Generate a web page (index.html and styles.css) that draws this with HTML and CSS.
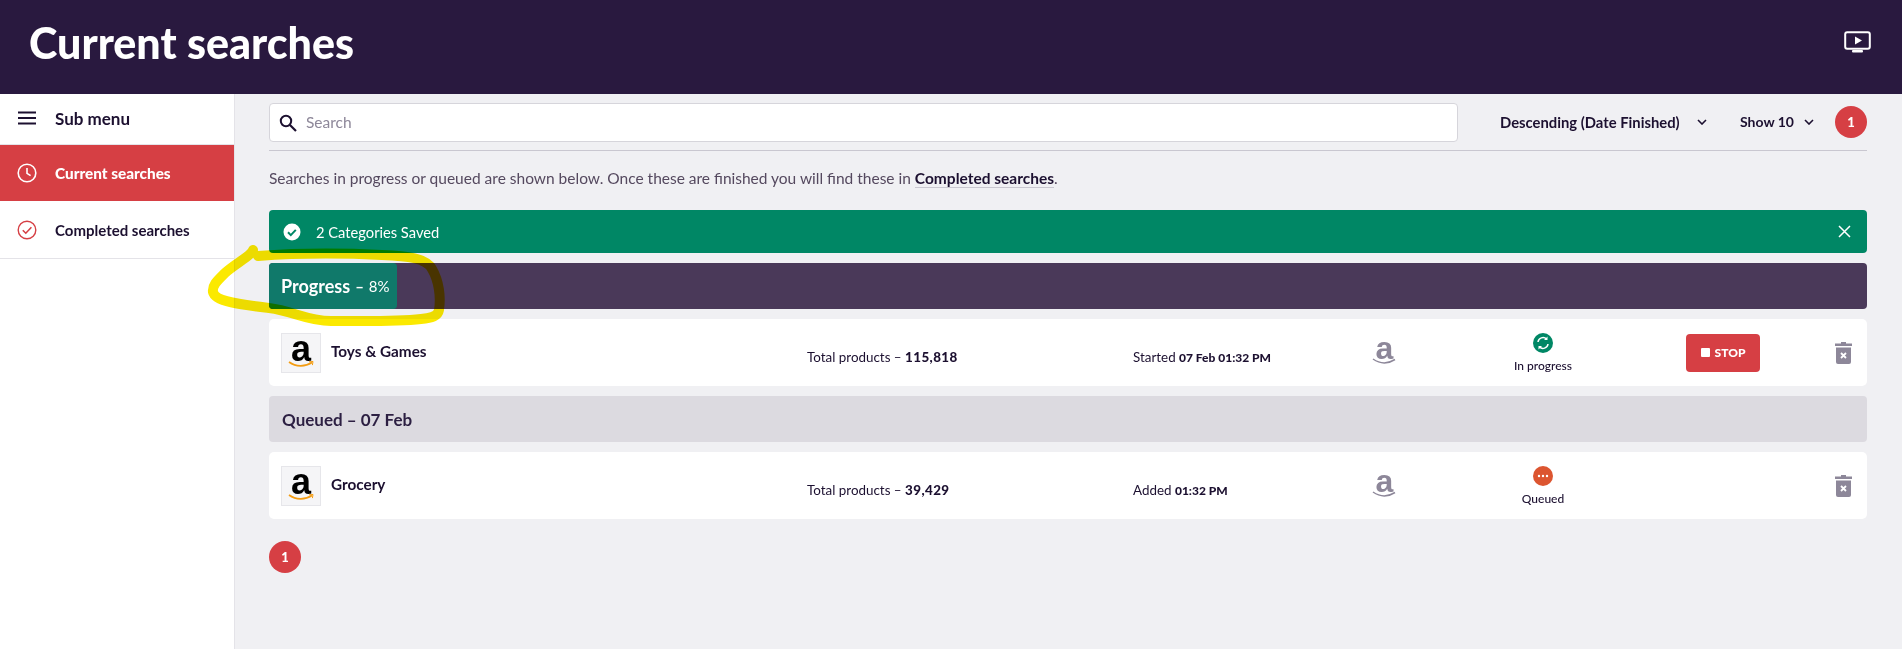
FILE: index.html
```html
<!DOCTYPE html>
<html lang="en">
<head>
    <meta charset="UTF-8">
    <meta name="viewport" content="width=device-width, initial-scale=1.0">
    <title>Current searches</title>
    <link rel="stylesheet" href="styles.css">
</head>
<body>
    <header class="top">
        <h1 class="top__title">Current searches</h1>
        <svg class="top__video" width="27" height="22" viewBox="0 0 27 22">
            <rect x="1.2" y="1.2" width="24.6" height="16.6" rx="2" fill="none" stroke="#fff" stroke-width="2"/>
            <path d="M11 5.5v8l7-4z" fill="#fff"/>
            <rect x="8" y="19" width="11" height="2.5" rx="1" fill="#fff"/>
        </svg>
    </header>

    <div class="page">
        <aside class="side">
            <div class="side__head">
                <svg width="18" height="14" viewBox="0 0 18 14"><path d="M0 1.5h18M0 7h18M0 12.5h18" stroke="#1c1030" stroke-width="2"/></svg>
                <span>Sub menu</span>
            </div>
            <a class="side__link side__link--on" href="#">
                <svg width="20" height="20" viewBox="0 0 20 20"><circle cx="10" cy="10" r="8.8" fill="none" stroke="#fff" stroke-width="1.6"/><path d="M10 5v5.3l3.6 2.4" fill="none" stroke="#fff" stroke-width="1.6"/></svg>
                <span>Current searches</span>
            </a>
            <a class="side__link" href="#">
                <svg width="20" height="20" viewBox="0 0 20 20"><circle cx="10" cy="10" r="8.8" fill="none" stroke="#d63f44" stroke-width="1.4"/><path d="M5.8 10.2l3 3 5.6-6" fill="none" stroke="#d63f44" stroke-width="1.6"/></svg>
                <span>Completed searches</span>
            </a>
        </aside>

        <main class="main">
            <div class="tools">
                <div class="search">
                    <svg width="18" height="18" viewBox="0 0 18 18"><circle cx="7" cy="7" r="5.2" fill="none" stroke="#1c1030" stroke-width="2"/><path d="M11 11l6 6" stroke="#1c1030" stroke-width="2.2"/></svg>
                    <span class="search__hint">Search</span>
                </div>
                <div class="sort sort--date">Descending (Date Finished)
                    <svg width="10" height="6" viewBox="0 0 10 6"><path d="M1 1l4 4 4-4" fill="none" stroke="#1c1030" stroke-width="1.6"/></svg>
                </div>
                <div class="sort sort--show">Show 10
                    <svg width="10" height="6" viewBox="0 0 10 6"><path d="M1 1l4 4 4-4" fill="none" stroke="#1c1030" stroke-width="1.6"/></svg>
                </div>
                <div class="pagenum">1</div>
            </div>

            <p class="intro">Searches in progress or queued are shown below. Once these are finished you will find these in <a href="#">Completed searches</a>.</p>

            <div class="alert">
                <svg width="18" height="18" viewBox="0 0 18 18"><circle cx="9" cy="9" r="8.5" fill="#fff"/><path d="M5 9.3l2.8 2.8 5-5.2" fill="none" stroke="#008765" stroke-width="2"/></svg>
                <span class="alert__text">2 Categories Saved</span>
                <svg class="alert__close" width="13" height="13" viewBox="0 0 13 13"><path d="M1 1l11 11M12 1L1 12" stroke="#fff" stroke-width="1.5"/></svg>
            </div>

            <div class="progress">
                <div class="progress__fill"><b>Progress</b> <b class="progress__dash">&ndash;</b> <span>8%</span></div>
            </div>

            <div class="row">
                <div class="row__name">
                    <div class="logo"><span>a</span><svg width="26" height="7" viewBox="0 0 26 7"><path d="M1 1c7 5 16 5 23 .5" fill="none" stroke="#f39c12" stroke-width="1.7"/><path d="M21 .8l4-.3-.6 3.6" fill="none" stroke="#f39c12" stroke-width="1"/></svg></div>
                    <b>Toys &amp; Games</b>
                </div>
                <div class="row__info row__info--total">Total products &ndash; <b>115,818</b></div>
                <div class="row__info">Started <b>07 Feb 01:32 PM</b></div>
                <div class="market"><span>a</span><svg width="25" height="7" viewBox="0 0 25 7"><path d="M1 1c7 5 15 5 22 .5" fill="none" stroke="#8d8799" stroke-width="1.5"/></svg></div>
                <div class="status">
                    <svg width="20" height="20" viewBox="0 0 20 20"><circle cx="10" cy="10" r="10" fill="#008765"/><path d="M5 9a5 5 0 0 1 8.600-2.800M15 11a5 5 0 0 1-8.600 2.800" fill="none" stroke="#fff" stroke-width="1.500"/><path d="M14.500 3.500v3.500h-3.500zM5.500 16.500v-3.500h3.500z" fill="#fff"/></svg>
                    <span>In progress</span>
                </div>
                <div class="stopcell"><button class="stop"><i></i>STOP</button></div>
                <svg class="trash" width="17" height="22" viewBox="0 0 17 22"><path d="M6 0h5v1.500h6v2.500H0V1.500h6z" fill="#8d8799"/><path d="M1 5.500h15V20a2 2 0 0 1-2 2H3a2 2 0 0 1-2-2z" fill="#8d8799"/><path d="M6 11l5 5M11 11l-5 5" stroke="#fff" stroke-width="1.800"/></svg>
            </div>

            <div class="queued">Queued &ndash; 07 Feb</div>

            <div class="row">
                <div class="row__name">
                    <div class="logo"><span>a</span><svg width="26" height="7" viewBox="0 0 26 7"><path d="M1 1c7 5 16 5 23 .5" fill="none" stroke="#f39c12" stroke-width="1.7"/><path d="M21 .8l4-.3-.6 3.6" fill="none" stroke="#f39c12" stroke-width="1"/></svg></div>
                    <b>Grocery</b>
                </div>
                <div class="row__info row__info--total">Total products &ndash; <b>39,429</b></div>
                <div class="row__info">Added <b>01:32 PM</b></div>
                <div class="market"><span>a</span><svg width="25" height="7" viewBox="0 0 25 7"><path d="M1 1c7 5 15 5 22 .5" fill="none" stroke="#8d8799" stroke-width="1.5"/></svg></div>
                <div class="status">
                    <svg width="20" height="20" viewBox="0 0 20 20"><circle cx="10" cy="10" r="10" fill="#dc5530"/><circle cx="6" cy="10" r="1.200" fill="#fff"/><circle cx="10" cy="10" r="1.200" fill="#fff"/><circle cx="14" cy="10" r="1.200" fill="#fff"/></svg>
                    <span>Queued</span>
                </div>
                <div class="stopcell"></div>
                <svg class="trash" width="17" height="22" viewBox="0 0 17 22"><path d="M6 0h5v1.500h6v2.500H0V1.500h6z" fill="#8d8799"/><path d="M1 5.500h15V20a2 2 0 0 1-2 2H3a2 2 0 0 1-2-2z" fill="#8d8799"/><path d="M6 11l5 5M11 11l-5 5" stroke="#fff" stroke-width="1.800"/></svg>
            </div>

            <div class="pagenum pagenum--bottom">1</div>
        </main>
    </div>

    <!-- marker scribble drawn over the page -->
    <svg class="scribble" width="245" height="105" viewBox="205 245 245 105">
        <path d="M253 250c-2 6-17 13-28 23-7 7-13 12-12 19 2 10 30 13 56 16 24 3 38 13 62 13 30 0 64 1 90-2 11-1 17-3 18-9 2-13 0-29-7-41-6-11-24-13-50-14-40-2-84-2-124 1" fill="none" stroke="#fbe900" stroke-width="10" stroke-linecap="round" stroke-linejoin="round"/>
    </svg>
</body>
</html>
```

FILE: styles.css
```css
:root {
   --dark: #29193f;
   --ink: #1c1030;
   --red: #d63f44;
   --green: #008765;
   --grey: #8d8799;
   --page: #f0f0f3;
   --line: #e4e3e8;
}

* {
   padding: 0;
   margin: 0;
   box-sizing: border-box;
}

a {
   text-decoration: none;
   color: inherit;
}

body {
   font-family: "Lato", sans-serif;
   color: var(--ink);
   background-color: var(--page);
   height: 649px;
   overflow: hidden;
   position: relative;
}

.top {
   height: 94px;
   background-color: var(--dark);
   display: flex;
   align-items: center;
   justify-content: space-between;
   padding: 0 31px 0 29px;
}

.top__title {
   font-size: 43px;
   font-weight: 900;
   color: #fff;
   margin-top: -10px;
}

.top__video {
   margin-top: -10px;
}

.page {
   display: flex;
   height: 555px;
}

.side {
   width: 235px;
   background-color: #fff;
   border-right: 1px solid var(--line);
   flex-shrink: 0;
}

.side__head {
   height: 51px;
   display: flex;
   align-items: center;
   gap: 19px;
   padding: 0 0 2px 18px;
   font-size: 17px;
   font-weight: 700;
   border-bottom: 1px solid var(--line);
}

.side__link {
   height: 58px;
   display: flex;
   align-items: center;
   gap: 18px;
   padding-left: 17px;
   font-size: 15px;
   font-weight: 700;
   border-bottom: 1px solid var(--line);
}

.side__link--on {
   background-color: var(--red);
   color: #fff;
   border-bottom: none;
   height: 56px;
   font-size: 15.300px;
   font-weight: 900;
}

.main {
   flex: 1;
   padding: 0 35px 0 34px;
}

.tools {
   height: 57px;
   display: flex;
   align-items: flex-start;
   padding-top: 9px;
   border-bottom: 1px solid #c9c7d0;
}

.search {
   width: 1189px;
   height: 39px;
   background-color: #fff;
   border: 1px solid #d6d5db;
   border-radius: 4px;
   display: flex;
   align-items: center;
   gap: 9px;
   padding-left: 9px;
}

.search__hint {
   font-size: 15.500px;
   color: var(--grey);
   padding-bottom: 2px;
}

.sort {
   height: 39px;
   display: flex;
   align-items: center;
   font-size: 14.800px;
   font-weight: 700;
   white-space: nowrap;
   padding-bottom: 2px;
}

.sort--date {
   margin-left: 42px;
   width: 240px;
   gap: 17px;
}

.sort--show {
   width: 95px;
   gap: 10px;
   font-size: 14px;
}

.pagenum {
   width: 32px;
   height: 32px;
   margin-top: 3px;
   border-radius: 50%;
   background-color: var(--red);
   color: #fff;
   font-size: 13px;
   font-weight: 900;
   display: flex;
   align-items: center;
   justify-content: center;
   flex-shrink: 0;
}

.pagenum--bottom {
   margin-top: 22px;
}

.intro {
   margin-top: 17px;
   height: 20px;
   font-size: 15.500px;
   line-height: 20px;
   color: #55495f;
   white-space: nowrap;
}

.intro a {
   font-weight: 700;
   color: var(--ink);
   border-bottom: 1px solid #c9c7d0;
}

.alert {
   margin-top: 22px;
   height: 43px;
   background-color: var(--green);
   border-radius: 4px;
   color: #fff;
   display: flex;
   align-items: center;
   padding: 0 16px 0 14px;
}

.alert__text {
   margin-left: 15px;
   font-size: 14.700px;
}

.alert__close {
   margin-left: auto;
}

.progress {
   margin-top: 10px;
   height: 46px;
   background-color: #4a3959;
   border-radius: 4px;
}

.progress__fill {
   width: 128px;
   height: 46px;
   background-color: #10796a;
   border-radius: 4px;
   color: #fff;
   display: flex;
   align-items: center;
   gap: 5px;
   padding-left: 12px;
   font-size: 18px;
   white-space: nowrap;
}

.progress__fill span {
   font-size: 15px;
}

.progress__dash {
   font-size: 15px;
}

.row {
   margin-top: 10px;
   height: 67px;
   background-color: #fff;
   border-radius: 5px;
   display: grid;
   grid-template-columns: 526px 326px 239px 91px 160px 63px 74px 1fr;
   align-items: center;
   padding: 0 15px 0 12px;
}

.row__name {
   display: flex;
   align-items: center;
   gap: 10px;
   font-size: 15.300px;
}

.row__name b {
   padding-bottom: 3px;
}

.logo {
   width: 40px;
   height: 40px;
   background-color: #f5f5f7;
   border: 1px solid #e6e6ea;
   display: flex;
   flex-direction: column;
   align-items: center;
   justify-content: center;
}

.logo span {
   font-family: "Liberation Sans", sans-serif;
   font-size: 36px;
   font-weight: 700;
   line-height: 22px;
   color: #000;
   height: 23px;
}

.logo svg {
   display: block;
}

.row__info {
   font-size: 13.400px;
   padding-top: 8px;
   white-space: nowrap;
}

.row__info b {
   font-size: 12px;
   font-weight: 900;
}

.row__info--total b {
   font-size: 13.400px;
   letter-spacing: 0.4px;
}

.market {
   width: 25px;
   display: flex;
   flex-direction: column;
   align-items: center;
   margin-top: -3px;
}

.market span {
   font-family: "Liberation Sans", sans-serif;
   font-size: 32px;
   font-weight: 700;
   line-height: 20px;
   height: 20px;
   color: var(--grey);
}

.market svg {
   display: block;
}

.status {
   display: flex;
   flex-direction: column;
   align-items: center;
   gap: 5px;
   font-size: 12px;
   font-weight: 500;
}

.stopcell {
   grid-column: 7;
}

.stop {
   width: 74px;
   height: 38px;
   background-color: var(--red);
   border: none;
   border-radius: 4px;
   color: #fff;
   font-family: inherit;
   font-size: 12px;
   font-weight: 900;
   display: flex;
   align-items: center;
   justify-content: center;
   gap: 5px;
}

.stop i {
   width: 9px;
   height: 9px;
   background-color: #fff;
   border-radius: 1px;
}

.trash {
   justify-self: end;
}

.queued {
   margin-top: 10px;
   height: 46px;
   background-color: #dcdae0;
   border-radius: 4px;
   display: flex;
   align-items: center;
   padding-left: 13px;
   font-size: 17px;
   font-weight: 700;
   color: #2c1f42;
}

.scribble {
   position: absolute;
   left: 205px;
   top: 245px;
   mix-blend-mode: multiply;
   pointer-events: none;
}
```
